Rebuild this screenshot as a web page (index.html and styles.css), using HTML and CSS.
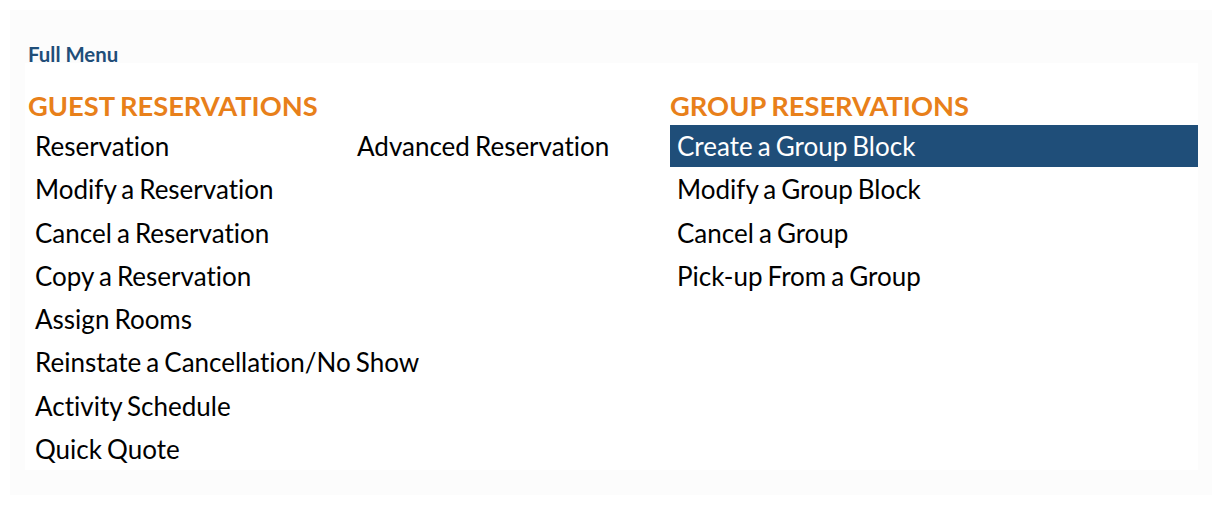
FILE: index.html
```html
<!DOCTYPE html>
<html lang="en">
<head>
  <meta charset="UTF-8">
  <title>Full Menu</title>
  <link rel="stylesheet" href="styles.css">
</head>
<body>

<div class="menu-panel">
  <div class="menu-title">Full Menu</div>

  <div class="menu-body">
    <div class="menu-section guest">
      <h2>GUEST RESERVATIONS</h2>
      <div class="guest-cols">
        <ul class="menu-list">
          <li><a href="#">Reservation</a></li>
          <li><a href="#">Modify a Reservation</a></li>
          <li><a href="#">Cancel a Reservation</a></li>
          <li><a href="#">Copy a Reservation</a></li>
          <li><a href="#">Assign Rooms</a></li>
          <li><a href="#">Reinstate a Cancellation/No Show</a></li>
          <li><a href="#">Activity Schedule</a></li>
          <li><a href="#">Quick Quote</a></li>
        </ul>
        <ul class="menu-list">
          <li><a href="#">Advanced Reservation</a></li>
        </ul>
      </div>
    </div>

    <div class="menu-section group">
      <h2>GROUP RESERVATIONS</h2>
      <ul class="menu-list">
        <li class="active"><a href="#">Create a Group Block</a></li>
        <li><a href="#">Modify a Group Block</a></li>
        <li><a href="#">Cancel a Group</a></li>
        <li><a href="#">Pick-up From a Group</a></li>
      </ul>
    </div>
  </div>
</div>

</body>
</html>
```

FILE: styles.css
```css
body {
  margin: 0;
  padding: 10px 13px 12px 10px;
  font-family: Lato, "Open Sans", sans-serif;
  font-variant-ligatures: none;
  background: #fff;
  color: #000;
}

.menu-panel {
  background: #fcfcfc;
  padding: 0 14px 25px 15px;
}

.menu-title {
  height: 53px;
  box-sizing: border-box;
  padding: 33px 0 0 3px;
  font-size: 20.4px;
  font-weight: bold;
  color: #1f4e79;
  line-height: 22px;
}

.menu-body {
  background: #fff;
  display: grid;
  grid-template-columns: 642px 1fr;
  padding: 28px 0 0 3px;
  height: 407px;
  box-sizing: border-box;
}

.menu-section h2 {
  margin: 0;
  font-size: 27.3px;
  font-weight: bold;
  color: #e8801a;
  line-height: 30px;
  word-spacing: -1px;
}

.guest-cols {
  display: grid;
  grid-template-columns: 322px 1fr;
}

.menu-list {
  list-style: none;
  margin: 4px 0 0;
  padding: 0;
}

.menu-list li {
  height: 43.3px;
}

.menu-list a {
  display: block;
  padding: 5px 8px 0 7px;
  font-size: 26px;
  line-height: 32px;
  color: #000;
  text-decoration: none;
  white-space: nowrap;
  word-spacing: -1.6px;
}

.menu-list li.active {
  background: #1f4e79;
  height: 42px;
  margin-bottom: 1.3px;
}

.menu-list li.active a {
  color: #fff;
}
```
